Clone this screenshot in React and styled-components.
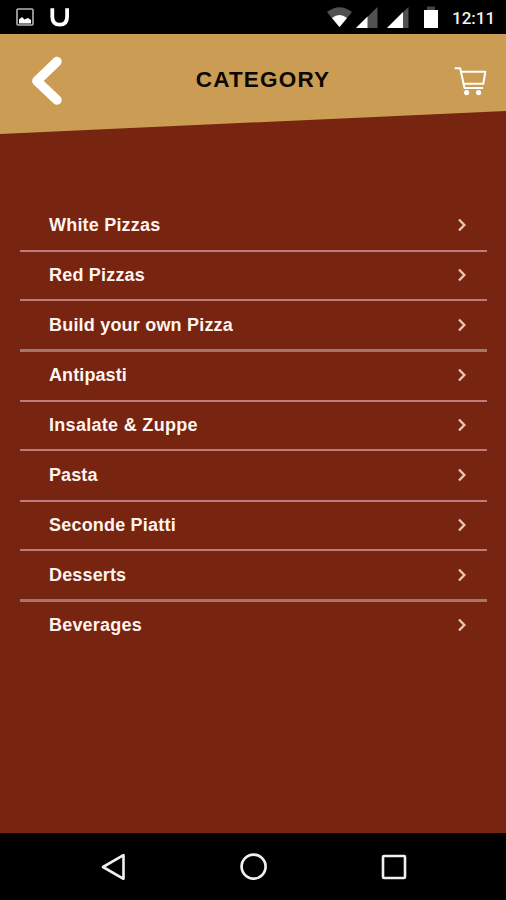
import styled, { createGlobalStyle } from "styled-components";

const GlobalStyle = createGlobalStyle`
  * {
    box-sizing: border-box;
  }
  body {
    margin: 0;
    background-color: #772411;
  }
`;

const Container = styled.div`
  display: flex;
  flex-direction: column;
  width: 506px;
  height: 900px;
  overflow: hidden;
  background-color: #772411;
  font-family: "Liberation Sans", Arial, sans-serif;
`;

const StatusBar = styled.div`
  display: flex;
  justify-content: space-between;
  height: 34px;
  padding: 0 11px 0 16px;
  background-color: #000;
`;

const StatusGroup = styled.div`
  display: flex;
  align-items: center;
`;

const StatusIcon = styled.svg`
  display: block;
  flex: none;
  margin-right: ${(props) => props.$gap || 0}px;
`;

const Clock = styled.span`
  width: 43px;
  color: #f2f2f2;
  font-family: Roboto, sans-serif;
  font-size: 17px;
  font-weight: 500;
  line-height: 34px;
  padding-top: 1px;
  white-space: nowrap;
`;

const Header = styled.header`
  display: flex;
  flex: none;
  align-items: flex-start;
  justify-content: space-between;
  height: 100px;
  padding: 22px 19px 0 31px;
  background-color: #ca9c54;
  clip-path: polygon(0 0, 100% 0, 100% 77px, 0 100%);
`;

const IconButton = styled.button`
  display: block;
  width: ${(props) => props.$width}px;
  padding: 0;
  border: none;
  background: none;
  cursor: pointer;

  svg {
    display: block;
  }
`;

const Title = styled.h1`
  margin: 10px 0 0 8px;
  color: #0c0700;
  font-size: 22.5px;
  font-weight: bold;
  letter-spacing: 1.2px;
  line-height: 28px;
`;

const List = styled.ul`
  flex: 1;
  margin: 0;
  padding: 66px 19px 0 20px;
  list-style: none;
`;

const Row = styled.li`
  display: flex;
  align-items: center;
  justify-content: space-between;
  height: 50px;
  padding: 0 19px 0 29px;
  cursor: pointer;
`;

// negative margins keep the rows on an even 50px step
const Divider = styled.div`
  height: ${(props) => (props.$thick ? 3 : 2)}px;
  margin: ${(props) =>
    props.$thick ? "-1px 0 -2px" : props.$low ? "0 0 -2px" : "-1px 0 -1px"};
  background-color: ${(props) => (props.$thick ? "#a4766c" : "#bd7c7a")};
`;

const Label = styled.span`
  color: #fff4ee;
  font-size: 18px;
  font-weight: bold;
  letter-spacing: ${(props) => props.$spacing}px;
  line-height: 24px;
  white-space: nowrap;
`;

const NavBar = styled.nav`
  display: flex;
  flex: none;
  align-items: center;
  justify-content: space-between;
  height: 67px;
  padding: 0 99px 0 101px;
  background-color: #000;
`;

const categories = [
  { name: "White Pizzas", spacing: 0.2, low: true },
  { name: "Red Pizzas", spacing: 0.2 },
  { name: "Build your own Pizza", spacing: 0.2, thick: true },
  { name: "Antipasti", spacing: 0.1, low: true },
  { name: "Insalate & Zuppe", spacing: 0.3 },
  { name: "Pasta", spacing: 0.1, low: true },
  { name: "Seconde Piatti", spacing: 0.2 },
  { name: "Desserts", spacing: 0.15, thick: true },
  { name: "Beverages", spacing: 0.2 },
];

const Signal = ({ fill, gap }) => (
  <StatusIcon $gap={gap} width="22" height="22" viewBox="0 0 22 22">
    <path d="M0 22L21.5 1v21z" fill="#515151" />
    <path d={`M0 22L${fill} ${22 - fill}V22z`} fill="#fff" />
  </StatusIcon>
);

const App = () => {
  return (
    <Container>
      <GlobalStyle />
      <StatusBar>
        <StatusGroup>
          <StatusIcon $gap={16} width="18" height="18" viewBox="0 0 18 18">
            <rect
              x="1"
              y="1"
              width="16"
              height="16"
              rx="1"
              fill="none"
              stroke="#b5b5b5"
              strokeWidth="1.6"
            />
            <path d="M3 15.5v-4l3-2.5 2.5 2.5L12 10l3 2v3.5z" fill="#fff" />
          </StatusIcon>
          <StatusIcon width="20" height="20" viewBox="0 0 20 20">
            <path
              d="M2.3 1.2v8.5q0 8 7.4 8t7.4-8V1.2"
              fill="none"
              stroke="#fff"
              strokeWidth="3.8"
            />
          </StatusIcon>
        </StatusGroup>

        <StatusGroup>
          <StatusIcon $gap={4} width="25" height="22" viewBox="0 0 25 22">
            <path d="M0 6Q12.5-3.5 25 6L12.5 21.5z" fill="#515151" />
            <path d="M5 12Q12.5 6 20 12L12.5 21z" fill="#fff" />
          </StatusIcon>
          <Signal fill={11.5} gap={9} />
          <Signal fill={16} gap={15} />
          <StatusIcon $gap={14} width="14" height="22" viewBox="0 0 14 22">
            <path d="M3 .5h8v3.5H3z" fill="#454545" />
            <path d="M0 4h14v18H0z" fill="#fff" />
          </StatusIcon>
          <Clock>12:11</Clock>
        </StatusGroup>
      </StatusBar>

      <Header>
        <IconButton $width={33} aria-label="Back">
          <svg width="33" height="50" viewBox="0 0 33 50">
            <path
              d="M26 5.5L5.8 25l20.2 19"
              fill="none"
              stroke="#fff"
              strokeWidth="9.4"
              strokeLinecap="round"
              strokeLinejoin="round"
            />
          </svg>
        </IconButton>
        <Title>CATEGORY</Title>
        <IconButton $width={33} aria-label="Cart">
          <svg
            width="33"
            height="50"
            viewBox="0 0 33 50"
            fill="none"
            stroke="#fff"
            strokeWidth="2"
            strokeLinecap="round"
            strokeLinejoin="round"
          >
            <path d="M1.5 12.3h4.7L10.5 32h17.8" />
            <path d="M7 15.8h24.3l-2 12H9.6" />
            <circle cx="12.6" cy="36.6" r="2.6" fill="#fff" stroke="none" />
            <circle cx="24.6" cy="36.6" r="2.6" fill="#fff" stroke="none" />
          </svg>
        </IconButton>
      </Header>

      <List>
        {categories.map((category, i) => (
          <div key={category.name}>
            <Row>
              <Label $spacing={category.spacing}>{category.name}</Label>
              <svg width="12" height="16" viewBox="0 0 12 16">
                <path
                  d="M3 2.5L8.3 8 3 13.5"
                  fill="none"
                  stroke="#eac5b6"
                  strokeWidth="2.4"
                />
              </svg>
            </Row>
            {i < categories.length - 1 && (
              <Divider $thick={category.thick} $low={category.low} />
            )}
          </div>
        ))}
      </List>

      <NavBar>
        <svg width="25" height="28" viewBox="0 0 25 28">
          <path
            d="M22.5 2.2v23.6L2 14z"
            fill="none"
            stroke="#f0f0f0"
            strokeWidth="2.6"
            strokeLinejoin="round"
          />
        </svg>
        <svg width="28" height="28" viewBox="0 0 28 28">
          <circle
            cx="13.6"
            cy="13.6"
            r="12"
            fill="none"
            stroke="#f0f0f0"
            strokeWidth="2.7"
          />
        </svg>
        <svg width="26" height="28" viewBox="0 0 26 28">
          <rect
            x="2"
            y="3"
            width="22"
            height="22"
            rx="1"
            fill="none"
            stroke="#f0f0f0"
            strokeWidth="2.6"
          />
        </svg>
      </NavBar>
    </Container>
  );
};

export default App;
